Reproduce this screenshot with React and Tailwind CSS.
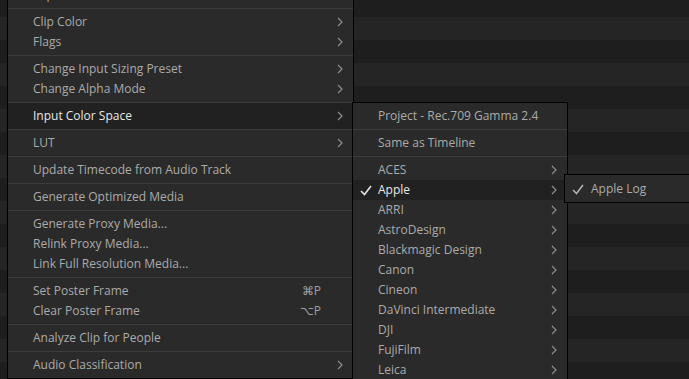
import React from 'react';

const Chevron = () => (
    <svg width="6" height="10" viewBox="0 0 6 10" className="shrink-0">
        <polyline points="1,1 5,5 1,9" fill="none" stroke="#8c8c8c" strokeWidth="1.2" />
    </svg>
);

const Check = ({ color = '#e6e6e6' }) => (
    <svg width="12" height="11" viewBox="0 0 12 11" className="shrink-0">
        <polyline points="1,6 4.5,9.5 11,1" fill="none" stroke={color} strokeWidth="1.6" />
    </svg>
);

const Item = ({ label, sub, shortcut, active, checked, textX = 'pl-[25px]', chevX = 'pr-[10px]' }) => (
    <div className={`relative h-5 flex items-center justify-between ${textX} ${chevX} ${active ? 'text-[#e8e8e8]' : 'text-[#ababab]'}`}>
        {checked && (
            <span className="absolute left-[7px] top-[5px]"><Check /></span>
        )}
        <span className="whitespace-nowrap">{label}</span>
        {shortcut && <span className="mr-[22px] text-[#a0a0a0]">{shortcut}</span>}
        {sub && <Chevron />}
    </div>
);

const Group = ({ children, active }) => (
    <div className={`py-[3px] ${active ? 'bg-[#212121]' : ''}`}>{children}</div>
);

const Sep = () => <div className="h-px bg-[#3c3c3c]" />;

const mainMenu = [
    [{ label: 'Clip Attributes...' }],
    [{ label: 'Clip Color', sub: true }, { label: 'Flags', sub: true }],
    [{ label: 'Change Input Sizing Preset', sub: true }, { label: 'Change Alpha Mode', sub: true }],
    [{ label: 'Input Color Space', sub: true, active: true }],
    [{ label: 'LUT', sub: true }],
    [{ label: 'Update Timecode from Audio Track' }],
    [{ label: 'Generate Optimized Media' }],
    [{ label: 'Generate Proxy Media...' }, { label: 'Relink Proxy Media...' }, { label: 'Link Full Resolution Media...' }],
    [{ label: 'Set Poster Frame', shortcut: '⌘P' }, { label: 'Clear Poster Frame', shortcut: '⌥P' }],
    [{ label: 'Analyze Clip for People' }],
    [{ label: 'Audio Classification', sub: true }],
];

const vendors = ['ARRI', 'AstroDesign', 'Blackmagic Design', 'Canon', 'Cineon', 'DaVinci Intermediate', 'DJI', 'FujiFilm', 'Leica'];

export default function App() {
    return (
        <div
            className="relative w-[689px] h-[379px] overflow-hidden bg-[repeating-linear-gradient(to_bottom,#1e1e1e_0px,#1e1e1e_17px,#252525_17px,#252525_40px,#1e1e1e_40px,#1e1e1e_46px)] text-[12px] leading-5"
            style={{ fontFamily: '"Open Sans", "Noto Sans", sans-serif' }}
        >
            {/* Main context menu */}
            <div className="absolute left-[7px] top-[-19px] w-[347px] bg-[#2a2a2a] border border-black">
                {mainMenu.map((group, gi) => (
                    <React.Fragment key={gi}>
                        {gi > 0 && <Sep />}
                        <Group active={group.some((i) => i.active)}>
                            {group.map((it) => (
                                <Item key={it.label} {...it} />
                            ))}
                        </Group>
                    </React.Fragment>
                ))}
            </div>

            {/* Input Color Space submenu */}
            <div className="absolute left-[352px] top-[102px] w-[216px] bg-[#2a2a2a] border border-black">
                <Group><Item label="Project - Rec.709 Gamma 2.4" /></Group>
                <Sep />
                <Group><Item label="Same as Timeline" /></Group>
                <Sep />
                <div className="pt-[3px]">
                    <Item label="ACES" sub />
                    <div className="bg-[#212121]">
                        <Item label="Apple" sub active checked />
                    </div>
                    {vendors.map((v) => (
                        <Item key={v} label={v} sub />
                    ))}
                </div>
            </div>

            {/* Apple submenu */}
            <div className="absolute left-[564px] top-[174px] w-[140px] bg-[#2a2a2a] border border-black pt-[4px] pb-[3px]">
                <div className="relative h-5 flex items-center pl-[26px] text-[#ababab]">
                    <span className="absolute left-[7px] top-[5px]"><Check color="#b0b0b0" /></span>
                    <span>Apple Log</span>
                </div>
            </div>
        </div>
    );
}
